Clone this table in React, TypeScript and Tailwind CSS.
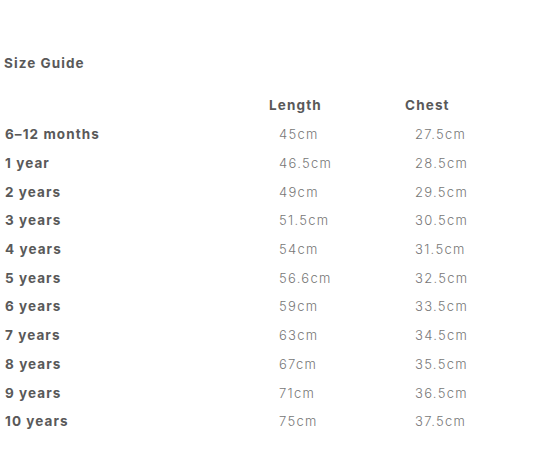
import React from "react";

const rows: [string, string, string][] = [
  ["6–12 months", "45cm", "27.5cm"],
  ["1 year", "46.5cm", "28.5cm"],
  ["2 years", "49cm", "29.5cm"],
  ["3 years", "51.5cm", "30.5cm"],
  ["4 years", "54cm", "31.5cm"],
  ["5 years", "56.6cm", "32.5cm"],
  ["6 years", "59cm", "33.5cm"],
  ["7 years", "63cm", "34.5cm"],
  ["8 years", "67cm", "35.5cm"],
  ["9 years", "71cm", "36.5cm"],
  ["10 years", "75cm", "37.5cm"],
];

export default function App() {
  return (
    <div
      className="w-[543px] h-[467px] bg-white text-[13.5px]"
      style={{ fontFamily: "Inter, 'Noto Sans', sans-serif" }}
    >
      <div className="pt-[54px] pl-[4px] font-bold text-[#595959] tracking-[0.08em] leading-[18px]">Size Guide</div>
      <div className="mt-[24px] grid grid-cols-[269px_136px_1fr] leading-[18px]">
        <div className="h-[24px]" />
        <div className="font-bold text-[#595959] tracking-[0.085em] h-[24px]">Length</div>
        <div className="font-bold text-[#595959] tracking-[0.085em] h-[24px]">Chest</div>
        {rows.map(([a, b, c]) => (
          <React.Fragment key={a}>
            <div className="pl-[5px] font-bold text-[#595959] tracking-[0.08em] h-[28.7px] flex items-center">{a}</div>
            <div className="pl-[10px] text-[13px] font-light text-[#777] tracking-[0.1em] h-[28.7px] flex items-center">{b}</div>
            <div className="pl-[10px] text-[13px] font-light text-[#777] tracking-[0.1em] h-[28.7px] flex items-center">{c}</div>
          </React.Fragment>
        ))}
      </div>
    </div>
  );
}
